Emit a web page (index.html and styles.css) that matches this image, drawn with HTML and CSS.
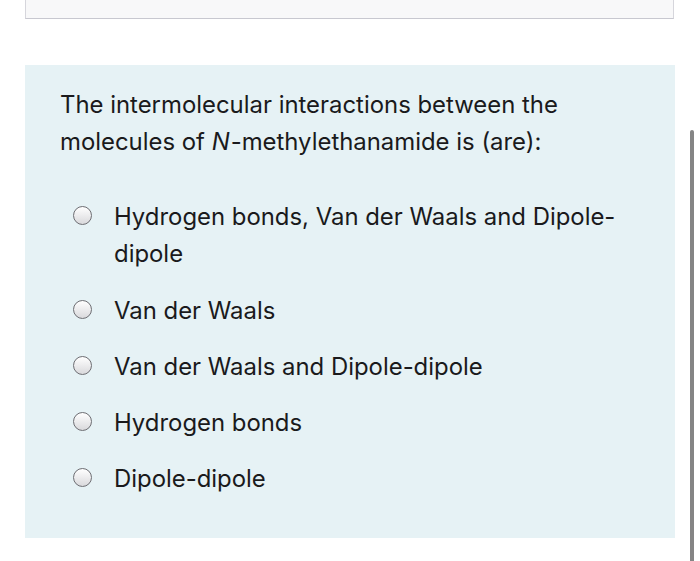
FILE: index.html
```html
<!DOCTYPE html>
<html>
<head>
<meta charset="utf-8">
<link rel="stylesheet" href="styles.css">
</head>
<body>
<div class="prev-box"></div>
<div class="panel">
  <p class="question">The intermolecular interactions between the molecules of <i class="var">N</i>-methylethanamide is (are):</p>
  <ul class="options">
    <li class="option"><span class="radio"></span><span class="label">Hydrogen bonds, Van der Waals and Dipole-dipole</span></li>
    <li class="option"><span class="radio"></span><span class="label">Van der Waals</span></li>
    <li class="option"><span class="radio"></span><span class="label">Van der Waals and Dipole-dipole</span></li>
    <li class="option"><span class="radio"></span><span class="label">Hydrogen bonds</span></li>
    <li class="option"><span class="radio"></span><span class="label">Dipole-dipole</span></li>
  </ul>
</div>
<div class="scrollbar"></div>
</body>
</html>
```

FILE: styles.css
```css
html, body {
  margin: 0;
  padding: 0;
  background: #ffffff;
}
body {
  width: 700px;
  height: 561px;
  overflow: hidden;
  position: relative;
  font-family: "Inter", "Liberation Sans", sans-serif;
  color: #1a1a1c;
}
.prev-box {
  margin-left: 25px;
  width: 647px;
  height: 18px;
  background: #f8f8f9;
  border: 1px solid #d6d6dc;
  border-top: none;
  border-bottom: 1px solid #c8c8d0;
}
.panel {
  margin: 46px 0 0 25px;
  width: 650px;
  box-sizing: border-box;
  background: #e6f2f5;
  padding: 21px 30px 40px 35px;
}
.question {
  margin: 0;
  font-size: 23.9px;
  line-height: 37px;
}
.var {
  padding-right: 1px;
}
.options {
  list-style: none;
  margin: 38px 0 0 0;
  padding: 0;
  display: flex;
  flex-direction: column;
  gap: 19px;
}
.option {
  display: flex;
  align-items: flex-start;
  font-size: 23.9px;
  line-height: 37.3px;
}
.radio {
  flex: none;
  width: 17px;
  height: 17px;
  border: 1.5px solid #6e6e73;
  border-radius: 50%;
  background: linear-gradient(#ffffff, #d9d9dc);
  margin: 8px 22px 0 13px;
}
.label {
  flex: 1;
  padding-right: 20px;
}
.scrollbar {
  position: absolute;
  left: 690px;
  top: 130px;
  width: 4px;
  height: 440px;
  background: #858585;
  border-radius: 2px;
}
```
